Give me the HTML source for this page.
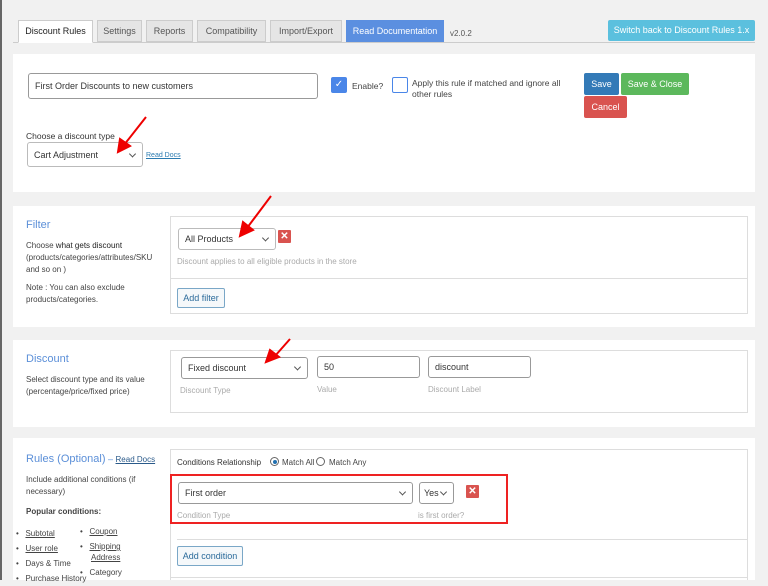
<!DOCTYPE html>
<html><head><style>
*{box-sizing:border-box;margin:0;padding:0}
body{width:768px;height:580px;overflow:hidden;background:#f1f1f1;font-family:"Liberation Sans",sans-serif;font-size:9px;color:#444;position:relative}
.a{position:absolute}
.tab{position:absolute;top:20px;height:22px;border:1px solid #ccc;background:#e5e5e5;color:#555;font-size:9px;line-height:20px;text-align:center}
.panel{position:absolute;left:13px;width:742px;background:#fff}
.box{position:absolute;left:170px;width:578px;border:1px solid #ddd;background:#fff}
.inp{position:absolute;border:1px solid #999;border-radius:3px;background:#fff;font-size:9px;color:#333;padding-left:6px;display:flex;align-items:center}
.sel:after{content:"";position:absolute;right:7px;top:50%;width:4px;height:4px;border-right:1px solid #555;border-bottom:1px solid #555;transform:translateY(-70%) rotate(45deg)}
.h{color:#5b8fd8;font-size:11px}
.lbl{color:#aaa;font-size:8px;position:absolute}
.btn{position:absolute;color:#fff;font-size:9px;text-align:center;border-radius:2px}
.x{position:absolute;width:13px;height:13px;background:#d9534f;color:#fff;font-size:10px;font-weight:bold;text-align:center;line-height:13px;border-radius:1px}
.obtn{position:absolute;border:1px solid #7aa7c7;background:#f5f8fa;color:#2a6a9a;border-radius:2px;font-size:9px;text-align:center}
</style></head><body>
<div class="a" style="left:0;top:0;width:2px;height:580px;background:#666"></div>
<div class="a" style="left:13px;top:42px;width:742px;height:1px;background:#ccc"></div>
<div class="tab" style="left:18px;width:75px;background:#fff;color:#222;border-bottom-color:#fff;height:23px">Discount Rules</div>
<div class="tab" style="left:97px;width:45px">Settings</div>
<div class="tab" style="left:146px;width:47px">Reports</div>
<div class="tab" style="left:197px;width:69px">Compatibility</div>
<div class="tab" style="left:270px;width:72px">Import/Export</div>
<div class="tab" style="left:346px;width:98px;background:#5b8fe0;color:#fff;border-color:#5b8fe0">Read Documentation</div>
<div class="a" style="left:450px;top:29px;font-size:8px;color:#555">v2.0.2</div>
<div class="btn" style="left:608px;top:20px;width:147px;height:21px;line-height:21px;background:#5bc0de">Switch back to Discount Rules 1.x</div>

<div class="panel" style="top:54px;height:138px"></div>
<div class="inp" style="left:28px;top:73px;width:290px;height:26px">First Order Discounts to new customers</div>
<div class="a" style="left:331px;top:77px;width:16px;height:16px;background:#4a86e8;border-radius:2px;color:#fff;font-size:10px;text-align:center;line-height:16px">✓</div>
<div class="a" style="left:352px;top:81px;font-size:8.5px">Enable?</div>
<div class="a" style="left:392px;top:77px;width:16px;height:16px;border:1px solid #4a86e8;border-radius:2px"></div>
<div class="a" style="left:412px;top:78px;width:170px;font-size:8.5px;line-height:11px">Apply this rule if matched and ignore all other rules</div>
<div class="btn" style="left:584px;top:73px;width:35px;height:22px;line-height:22px;background:#337ab7">Save</div>
<div class="btn" style="left:621px;top:73px;width:68px;height:22px;line-height:22px;background:#5cb85c">Save &amp; Close</div>
<div class="btn" style="left:584px;top:96px;width:43px;height:22px;line-height:22px;background:#d9534f">Cancel</div>
<div class="a" style="left:26px;top:131px;font-size:8.5px;color:#333">Choose a discount type</div>
<div class="inp sel" style="left:27px;top:142px;width:116px;height:25px;border-color:#bbb">Cart Adjustment</div>
<div class="a" style="left:146px;top:152px;font-size:7px;color:#2a7ab0;text-decoration:underline">Read Docs</div>

<div class="panel" style="top:206px;height:121px"></div>
<div class="a h" style="left:26px;top:219px">Filter</div>
<div class="a" style="left:26px;top:240px;width:135px;font-size:8px;line-height:12px">Choose <span style="color:#222">what gets discount</span> (products/categories/attributes/SKU and so on )<br><div style="height:6px"></div>Note : You can also exclude products/categories.</div>
<div class="box" style="top:216px;height:98px"></div>
<div class="inp sel" style="left:178px;top:228px;width:98px;height:22px;border-color:#bbb">All Products</div>
<div class="x" style="left:278px;top:230px">✕</div>
<div class="lbl" style="left:177px;top:257px">Discount applies to all eligible products in the store</div>
<div class="a" style="left:171px;top:278px;width:576px;height:1px;background:#ddd"></div>
<div class="obtn" style="left:177px;top:288px;width:48px;height:20px;line-height:18px">Add filter</div>

<div class="panel" style="top:340px;height:87px"></div>
<div class="a h" style="left:26px;top:353px">Discount</div>
<div class="a" style="left:26px;top:374px;width:135px;font-size:8px;line-height:12px">Select discount type and its value (percentage/price/fixed price)</div>
<div class="box" style="top:350px;height:63px"></div>
<div class="inp sel" style="left:181px;top:357px;width:127px;height:22px">Fixed discount</div>
<div class="inp" style="left:317px;top:356px;width:103px;height:22px">50</div>
<div class="inp" style="left:428px;top:356px;width:103px;height:22px">discount</div>
<div class="lbl" style="left:180px;top:386px">Discount Type</div>
<div class="lbl" style="left:317px;top:385px">Value</div>
<div class="lbl" style="left:428px;top:385px">Discount Label</div>

<div class="panel" style="top:438px;height:142px"></div>
<div class="a" style="left:26px;top:453px"><span class="h">Rules (Optional)</span> <span style="color:#5b8fd8">–</span> <span style="font-size:8px;color:#2a5a8a;text-decoration:underline">Read Docs</span></div>
<div class="a" style="left:26px;top:474px;width:135px;font-size:8px;line-height:12px">Include additional conditions (if necessary)</div>
<div class="a" style="left:26px;top:507px;font-size:8px;font-weight:bold;color:#444">Popular conditions:</div>
<div class="a" style="left:16px;top:526px;font-size:8px;line-height:15px">
<div>•&nbsp;&nbsp;&nbsp;<u>Subtotal</u></div><div>•&nbsp;&nbsp;&nbsp;<u>User role</u></div><div>•&nbsp;&nbsp;&nbsp;Days &amp; Time</div><div>•&nbsp;&nbsp;&nbsp;Purchase History</div></div>
<div class="a" style="left:80px;top:526px;font-size:8px;line-height:11px">
<div style="height:15px">•&nbsp;&nbsp;&nbsp;<u>Coupon</u></div><div>•&nbsp;&nbsp;&nbsp;<u>Shipping</u></div><div style="padding-left:11px"><u>Address</u></div><div style="margin-top:4px">•&nbsp;&nbsp;&nbsp;Category</div></div>
<div class="box" style="top:449px;height:131px;border-bottom:none"></div>
<div class="a" style="left:177px;top:458px;font-size:8px;color:#333">Conditions Relationship</div>
<div class="a" style="left:270px;top:457px;width:9px;height:9px;border:1px solid #666;border-radius:50%"><div style="margin:1.5px;width:4px;height:4px;border-radius:50%;background:#2271b1"></div></div>
<div class="a" style="left:282px;top:458px;font-size:8px">Match All</div>
<div class="a" style="left:316px;top:457px;width:9px;height:9px;border:1px solid #666;border-radius:50%"></div>
<div class="a" style="left:329px;top:458px;font-size:8px">Match Any</div>
<div class="a" style="left:170px;top:474px;width:338px;height:50px;border:2px solid #e22"></div>
<div class="inp sel" style="left:178px;top:482px;width:235px;height:22px">First order</div>
<div class="inp sel" style="left:419px;top:482px;width:35px;height:22px;padding-left:4px">Yes</div>
<div class="x" style="left:466px;top:485px">✕</div>
<div class="lbl" style="left:177px;top:511px">Condition Type</div>
<div class="lbl" style="left:418px;top:511px">is first order?</div>
<div class="a" style="left:177px;top:539px;width:571px;height:1px;background:#ddd"></div>
<div class="obtn" style="left:177px;top:546px;width:66px;height:20px;line-height:18px">Add condition</div>
<div class="a" style="left:170px;top:577px;width:578px;height:3px;border-top:1px solid #ddd"></div>

<svg class="a" style="left:0;top:0" width="768" height="580">
<g stroke="#e00" stroke-width="2" fill="#e00">
<line x1="146" y1="117" x2="124" y2="145"/><polygon points="118,152 120,139 130,146"/>
<line x1="271" y1="196" x2="247" y2="228"/><polygon points="240,236 243,222 253,230"/>
<line x1="290" y1="339" x2="275" y2="356"/><polygon points="266,362 270,350 279,357"/>
</g></svg>
</body></html>
